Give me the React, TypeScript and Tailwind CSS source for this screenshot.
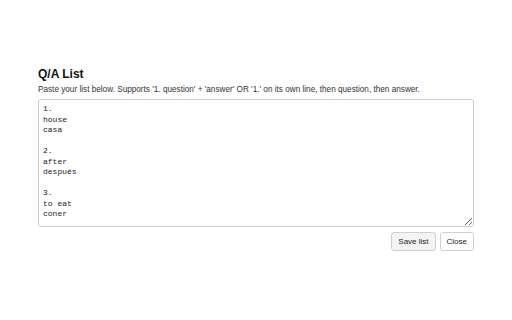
import React from "react";

const text = `1.
house
casa

2.
after
después

3.
to eat
coner`;

export default function App() {
  return (
    <div className="w-[512px] h-[320px] bg-white px-[38px] pt-[66px]" style={{ fontFamily: '"Liberation Sans", Arial, sans-serif' }}>
      <h2 className="text-[12px] leading-[16px] font-bold text-[#111]">Q/A List</h2>
      <p className="mt-[3px] text-[8.2px] leading-[10px] text-[#333]">
        Paste your list below. Supports '1. question' + 'answer' OR '1.' on its own line, then question, then answer.
      </p>
      <textarea
        defaultValue={text}
        className="mt-[4px] block w-[436px] h-[128px] border border-[#cfcfcf] rounded-[3px] px-[4px] pt-[4px] pb-[3px] text-[8px] leading-[10.5px] text-[#222] resize-y outline-none"
        style={{ fontFamily: '"Liberation Mono", "DejaVu Sans Mono", monospace' }}
      />
      <div className="mt-[5px] flex justify-end gap-[4px]">
        <button className="h-[19px] px-[6px] text-[8px] border border-[#cfcfcf] rounded-[3px] bg-[#f4f4f4] text-[#222]">Save list</button>
        <button className="h-[19px] px-[6px] text-[8px] border border-[#cfcfcf] rounded-[3px] bg-white text-[#222]">Close</button>
      </div>
    </div>
  );
}
